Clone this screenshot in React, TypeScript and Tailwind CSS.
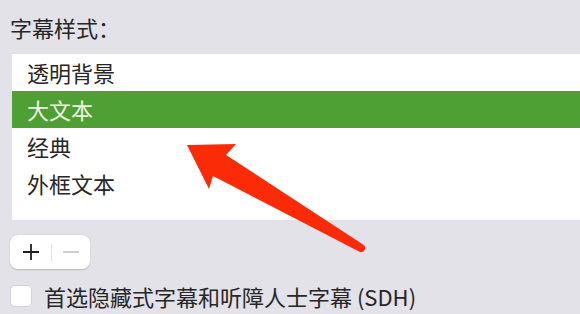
const styles = ["透明背景", "大文本", "经典", "外框文本"];

export default function App() {
  return (
    <div
      className="relative w-[580px] h-[314px] overflow-hidden bg-[#e3e2e8] px-[10px] text-[#262626]"
      style={{ fontFamily: '"Noto Sans CJK SC", "Noto Sans", sans-serif' }}
    >
      <div className="mt-[12px] text-[22px] leading-[30px]">字幕样式：</div>

      {/* style list */}
      <div className="mt-[12px] ml-[2px] mr-[-10px] h-[166px] bg-white">
        {styles.map((s, i) => (
          <div
            key={s}
            className={
              i === 1
                ? "flex h-[37px] items-center bg-[#4e9f34] pl-[15px] text-[22px] text-[#eef6e2]"
                : "flex h-[37px] items-center pl-[15px] text-[22px]"
            }
          >
            {s}
          </div>
        ))}
      </div>

      {/* + / - buttons */}
      <div className="mt-[15px] flex h-[34px] w-[80px] items-center rounded-[8px] bg-white shadow-[0_0.5px_1.5px_rgba(0,0,0,0.2)]">
        <div className="flex w-[41px] justify-center">
          <svg width="18" height="18" viewBox="0 0 18 18">
            <path d="M9 1v16M1 9h16" stroke="#1f1f1f" strokeWidth="1.8" />
          </svg>
        </div>
        <div className="h-[17px] w-px bg-[#e2e2e2]" />
        <div className="flex flex-1 justify-center">
          <svg width="18" height="18" viewBox="0 0 18 18">
            <path d="M1 9h16" stroke="#c4c4c4" strokeWidth="1.6" />
          </svg>
        </div>
      </div>

      {/* SDH checkbox */}
      <div className="mt-[12px] flex h-[30px] items-center gap-[12px]">
        <div className="h-[22px] w-[22px] rounded-[5px] border border-[#d2d2d6] bg-white" />
        <span className="text-[22px] leading-[30px]">首选隐藏式字幕和听障人士字幕 (SDH)</span>
      </div>

      {/* annotation arrow */}
      <svg
        className="pointer-events-none absolute inset-0"
        width="580"
        height="314"
        viewBox="0 0 580 314"
      >
        <path
          d="M187 145 L236 144 L226 155 L363 244.5 A4 4 0 0 1 359 251.5 L213 176 L209 189 Z"
          fill="#fb2a07"
        />
      </svg>
    </div>
  );
}
